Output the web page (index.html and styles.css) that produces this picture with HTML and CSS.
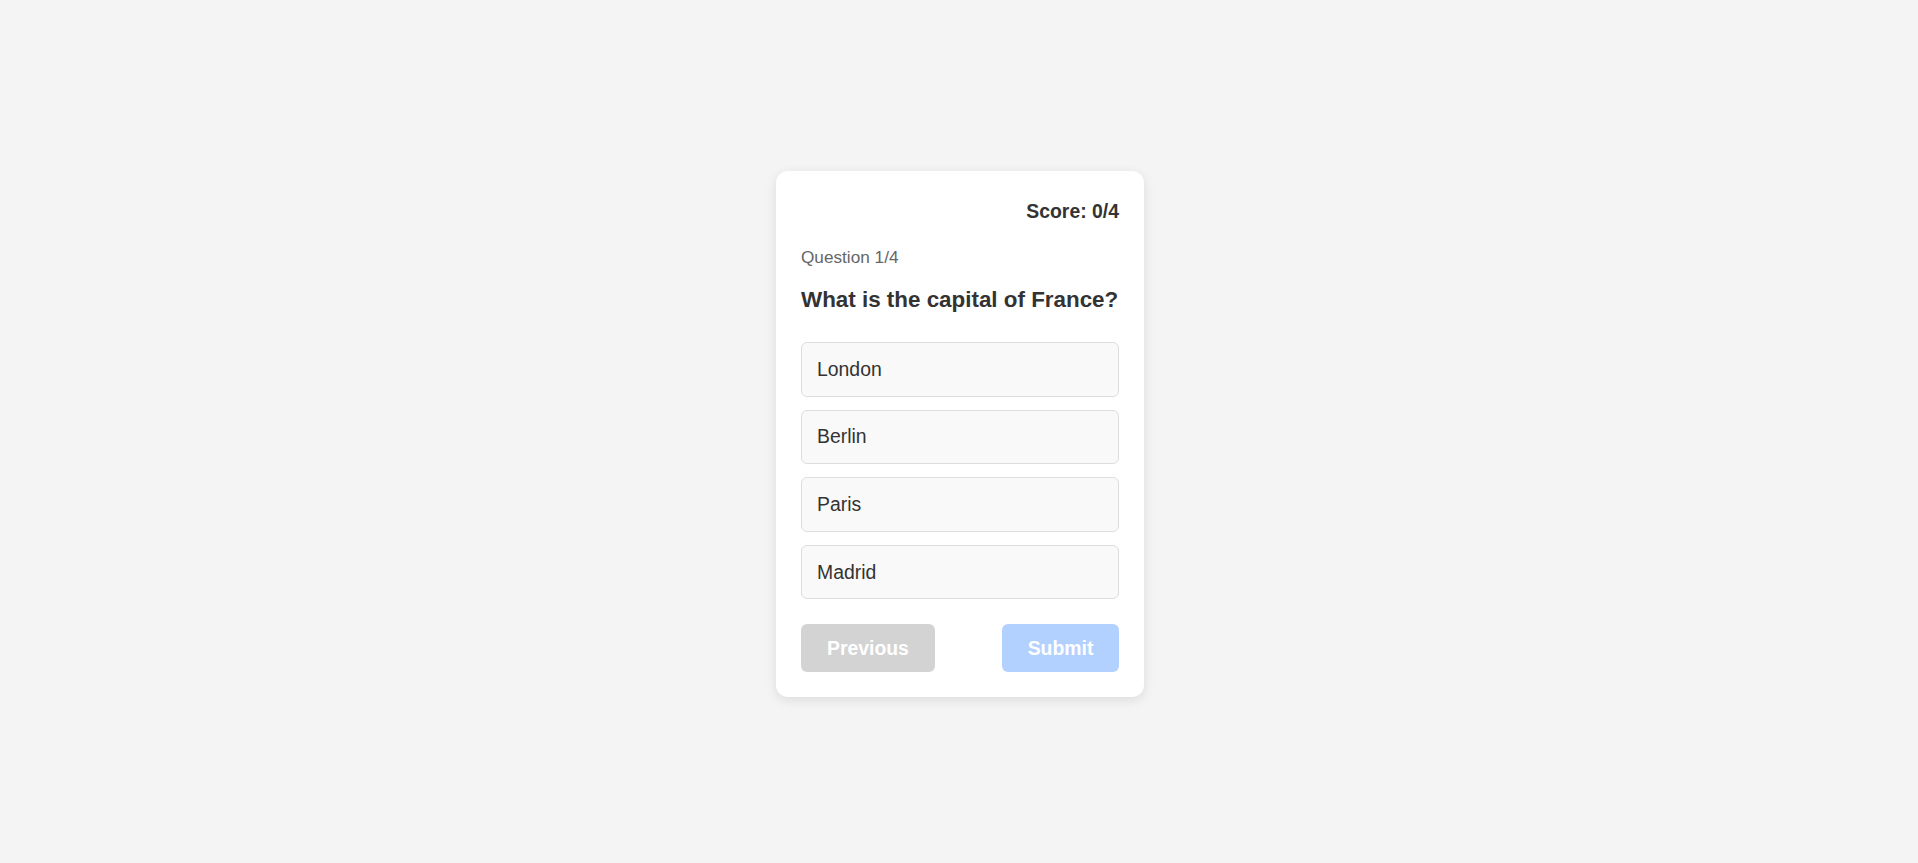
FILE: index.html
```html
<!DOCTYPE html>
<html lang="en">
<head>
<meta charset="UTF-8">
<title>Quiz</title>
<link rel="stylesheet" href="styles.css">
</head>
<body>
<div class="page">
  <div class="card">
    <div class="score">Score: 0/4</div>
    <div class="progress">Question 1/4</div>
    <h2 class="question">What is the capital of France?</h2>
    <div class="options">
      <button class="option">London</button>
      <button class="option">Berlin</button>
      <button class="option">Paris</button>
      <button class="option">Madrid</button>
    </div>
    <div class="actions">
      <button class="btn btn-prev" disabled>Previous</button>
      <button class="btn btn-submit" disabled>Submit</button>
    </div>
  </div>
</div>
</body>
</html>
```

FILE: styles.css
```css
* { box-sizing: border-box; }

html, body {
  margin: 0;
  padding: 0;
}

body {
  background: #f4f4f4;
  font-family: "Liberation Sans", Arial, Helvetica, sans-serif;
  color: #333;
  line-height: 1.5;
}

.page {
  min-height: 100vh;
  display: flex;
  align-items: center;
  justify-content: center;
  padding-top: 5px;
  padding-left: 2px;
}

.card {
  width: 368px;
  background: #fff;
  border-radius: 12px;
  padding: 25px;
  box-shadow: 0 3px 12px rgba(0, 0, 0, 0.1);
}

.score {
  margin-top: 1px;
  text-align: right;
  font-size: 19.4px;
  font-weight: bold;
  line-height: 29.1px;
  color: #333;
}

.progress {
  margin-top: 19px;
  font-size: 17.2px;
  line-height: 25.8px;
  color: #666;
}

.question {
  margin: 11.7px 0 0;
  font-size: 22.4px;
  line-height: 33.6px;
  font-weight: bold;
  color: #333;
  white-space: nowrap;
}

.options {
  margin-top: 26.1px;
  display: flex;
  flex-direction: column;
  gap: 13.1px;
}

.option {
  display: block;
  width: 100%;
  text-align: left;
  font-family: inherit;
  font-size: 19.4px;
  line-height: 29.1px;
  color: #333;
  background: #f9f9f9;
  border: 1px solid #ddd;
  border-radius: 6px;
  padding: 11.7px 15px;
  margin: 0;
}

.actions {
  margin-top: 25px;
  display: flex;
  justify-content: space-between;
}

.btn {
  font-family: inherit;
  font-size: 19.4px;
  font-weight: bold;
  line-height: 29.1px;
  color: #fff;
  border: none;
  border-radius: 6px;
  padding: 9.3px 26px;
  margin: 0;
}

.btn-prev {
  background: #d3d3d3;
}

.btn-submit {
  background: #b3d1ff;
  padding: 9.3px 25.6px;
}
```
